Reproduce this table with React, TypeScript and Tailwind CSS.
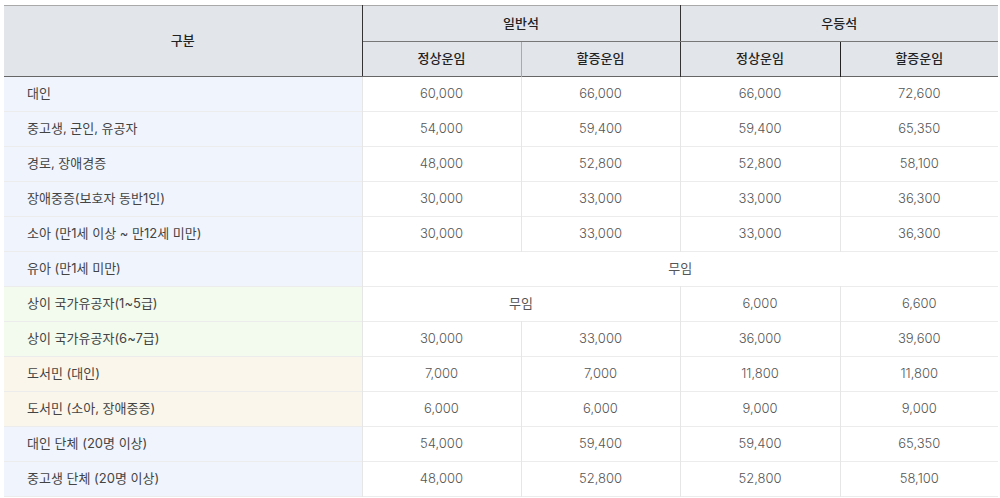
type Row = {
  label: string;
  bg: string;
  cells: (string | { text: string; span: number })[];
};

const BLUE = "bg-[#f0f5fd]";
const GREEN = "bg-[#f3fbee]";
const BEIGE = "bg-[#faf6ec]";

const rows: Row[] = [
  { label: "대인", bg: BLUE, cells: ["60,000", "66,000", "66,000", "72,600"] },
  { label: "중고생, 군인, 유공자", bg: BLUE, cells: ["54,000", "59,400", "59,400", "65,350"] },
  { label: "경로, 장애경증", bg: BLUE, cells: ["48,000", "52,800", "52,800", "58,100"] },
  { label: "장애중증(보호자 동반1인)", bg: BLUE, cells: ["30,000", "33,000", "33,000", "36,300"] },
  { label: "소아 (만1세 이상 ~ 만12세 미만)", bg: BLUE, cells: ["30,000", "33,000", "33,000", "36,300"] },
  { label: "유아 (만1세 미만)", bg: BLUE, cells: [{ text: "무임", span: 4 }] },
  { label: "상이 국가유공자(1~5급)", bg: GREEN, cells: [{ text: "무임", span: 2 }, "6,000", "6,600"] },
  { label: "상이 국가유공자(6~7급)", bg: GREEN, cells: ["30,000", "33,000", "36,000", "39,600"] },
  { label: "도서민 (대인)", bg: BEIGE, cells: ["7,000", "7,000", "11,800", "11,800"] },
  { label: "도서민 (소아, 장애중증)", bg: BEIGE, cells: ["6,000", "6,000", "9,000", "9,000"] },
  { label: "대인 단체 (20명 이상)", bg: BLUE, cells: ["54,000", "59,400", "59,400", "65,350"] },
  { label: "중고생 단체 (20명 이상)", bg: BLUE, cells: ["48,000", "52,800", "52,800", "58,100"] },
];

const App = () => {
  return (
    <div className="min-h-screen bg-white pl-[4px] pt-[5px] font-['Inter','Noto_Sans_CJK_KR',sans-serif]">
      <table className="w-[994px] table-fixed border-collapse text-[13px]">
        <colgroup>
          <col className="w-[358px]" />
          <col className="w-[159px]" />
          <col className="w-[159px]" />
          <col className="w-[160px]" />
          <col className="w-[158px]" />
        </colgroup>
        <thead className="bg-[#e2e5ea] text-[#222]">
          <tr className="h-[36px] border-t border-[#a9a9a9]">
            <th rowSpan={2} className="border-r border-b border-r-[#333] border-b-[#666] font-medium">
              구분
            </th>
            <th colSpan={2} className="border-r border-b border-r-[#333] border-b-[#777] font-medium">
              일반석
            </th>
            <th colSpan={2} className="border-b border-b-[#777] font-medium">
              우등석
            </th>
          </tr>
          <tr className="h-[35px] border-b border-[#666]">
            <th className="border-r border-[#aaa] font-medium">정상운임</th>
            <th className="border-r border-[#333] font-medium">할증운임</th>
            <th className="border-r border-[#222] font-medium">정상운임</th>
            <th className="font-medium">할증운임</th>
          </tr>
        </thead>
        <tbody>
          {rows.map((row) => (
            <tr key={row.label} className="h-[35px] border-b border-[#ececec]">
              <td className={`${row.bg} border-r border-[#e6e6e6] pl-[23px] text-left text-[#444]`}>
                {row.label}
              </td>
              {row.cells.map((c, i) =>
                typeof c === "string" ? (
                  <td
                    key={i}
                    className="border-r border-[#e6e6e6] text-center font-light text-[#555] last:border-r-0"
                  >
                    {c}
                  </td>
                ) : (
                  <td
                    key={i}
                    colSpan={c.span}
                    className="border-r border-[#e6e6e6] text-center text-[#555] last:border-r-0"
                  >
                    {c.text}
                  </td>
                )
              )}
            </tr>
          ))}
        </tbody>
      </table>
    </div>
  );
};

export default App;
